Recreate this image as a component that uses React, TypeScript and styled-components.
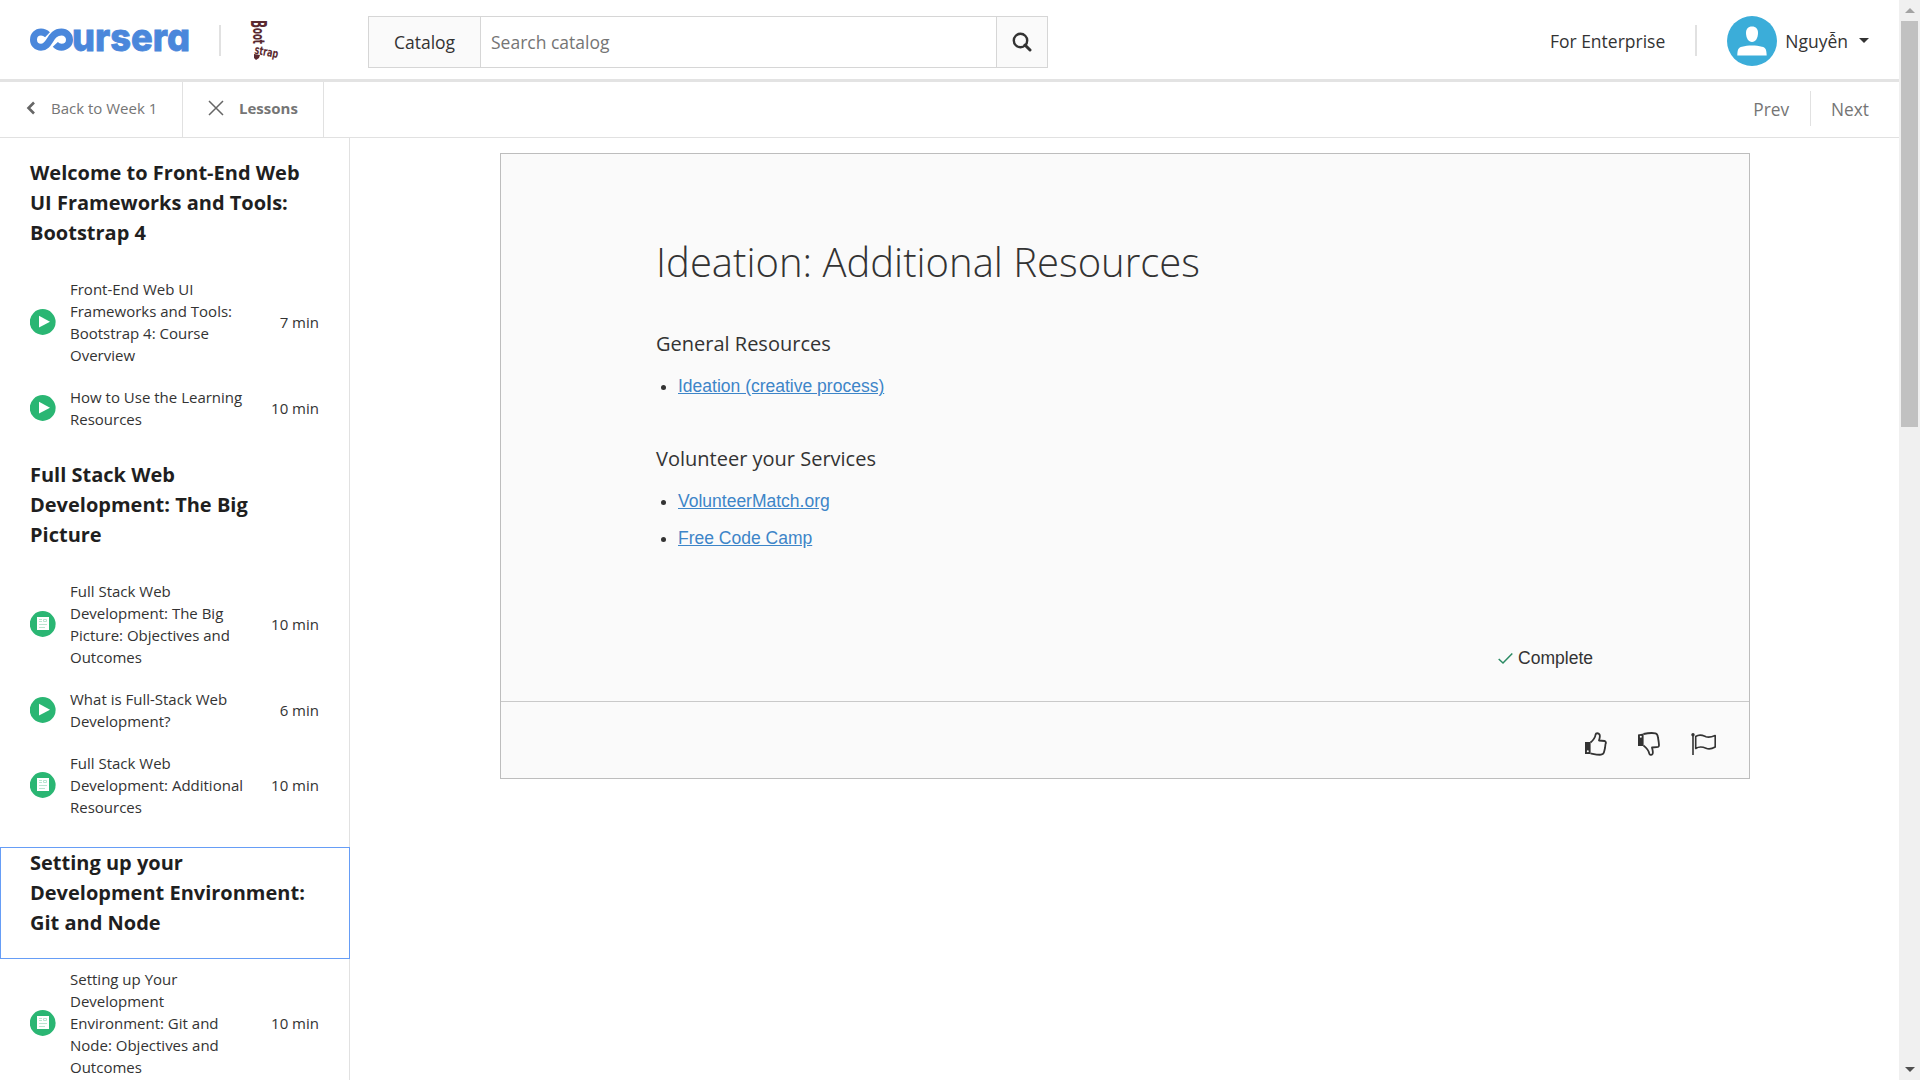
import React from "react";
import styled, { createGlobalStyle, css } from "styled-components";

const sans = `"Open Sans", "Noto Sans", sans-serif`;
const arial = `"Liberation Sans", Arial, sans-serif`;

const GlobalStyle = createGlobalStyle`
  *, *::before, *::after { box-sizing: border-box; }
  html, body { margin: 0; background: #fff; overflow: hidden; }
  body { font-family: ${sans}; color: #333; }
  h1, h2, h3, ul, p { margin: 0; padding: 0; }
  svg { display: block; }
`;

const Window = styled.div`
  display: grid;
  grid-template-columns: 1fr 21px;
  width: 1920px;
  height: 1080px;
  overflow: hidden;
`;

const Page = styled.div`
  display: flex;
  flex-direction: column;
  min-width: 0;
  height: 1080px;
  overflow: hidden;
`;

const Header = styled.header`
  display: flex;
  align-items: center;
  flex: none;
  height: 82px;
  padding: 2px 30px 0 30px;
  border-bottom: 3px solid #e3e3e3;
`;

const Rule = styled.span<{ $before: number; $after: number }>`
  width: 2px;
  height: 31px;
  margin: 0 ${(p) => p.$after}px 0 ${(p) => p.$before}px;
  background: #e1e1e1;
`;

const Search = styled.div`
  display: grid;
  grid-template-columns: 112px 1fr 51px;
  width: 680px;
  height: 52px;
  margin: 3px 0 0 78px;
  border: 1px solid #d6d6d6;
`;

const SearchButton = styled.button<{ $side: "left" | "right" }>`
  display: flex;
  align-items: center;
  justify-content: center;
  padding: 0;
  border: 0 solid #d6d6d6;
  ${(p) => (p.$side === "left" ? css`border-right-width: 1px;` : css`border-left-width: 1px;`)}
  background: #fafafa;
  color: #333;
  font: 400 17.5px ${sans};
`;

const SearchInput = styled.div`
  display: flex;
  align-items: center;
  padding-left: 10px;
  color: #757575;
  font-size: 17.5px;
`;

const Account = styled.div`
  display: flex;
  align-items: center;
  margin-left: auto;
  font-size: 17.5px;
`;

const UserName = styled.span`
  margin: 0 11px 0 8px;
`;

const SubBar = styled.nav`
  display: flex;
  flex: none;
  height: 56px;
  border-bottom: 1px solid #e1e1e1;
  color: #757575;
`;

const SubButton = styled.div<{ $width: number; $bold?: boolean }>`
  display: flex;
  align-items: center;
  width: ${(p) => p.$width}px;
  padding: 0 0 4px ${(p) => (p.$bold ? 25 : 26)}px;
  border-right: 1px solid #e1e1e1;
  font-size: 15px;
  font-weight: ${(p) => (p.$bold ? 700 : 400)};
`;

const Pager = styled.div`
  display: flex;
  align-items: center;
  margin-left: auto;
  padding-right: 30px;
  font-size: 17.3px;
`;

const PagerRule = styled.span`
  width: 1px;
  height: 35px;
  margin: -2px 20px 0 21px;
  background: #e1e1e1;
`;

const Body = styled.div`
  display: flex;
  flex: 1;
  min-height: 0;
`;

const Sidebar = styled.aside`
  flex: none;
  width: 350px;
  padding-top: 1px;
  border-right: 1px solid #e1e1e1;
`;

const SectionTitle = styled.h2<{ $focused?: boolean }>`
  margin: 18px -1px 0 0;
  padding: 0 30px 20px 29px;
  border: 1px solid ${(p) => (p.$focused ? "#669df6" : "transparent")};
  color: #1f1f1f;
  font-size: 20px;
  font-weight: 700;
  line-height: 30px;
`;

const Items = styled.div`
  margin-top: -1px;
  padding-bottom: 1px;
`;

const Item = styled.div`
  display: grid;
  grid-template-columns: 26px 180px 1fr;
  column-gap: 14px;
  align-items: center;
  padding: 10px 30px;
  font-size: 15px;
  line-height: 22px;
`;

const Duration = styled.span`
  margin-left: -14px;
  text-align: right;
`;

const Main = styled.main`
  flex: 1;
  padding: 15px 0 0 150px;
`;

const Card = styled.article`
  display: flex;
  flex-direction: column;
  width: 1250px;
  height: 626px;
  border: 1px solid #bdbdbd;
  background: #fafafa;
`;

const CardBody = styled.div`
  flex: 1;
  padding: 75px 155px 0;
`;

const Title = styled.h1`
  color: #333;
  font-size: 40px;
  font-weight: 300;
  line-height: 66px;
`;

const Topic = styled.h3<{ $gap: number }>`
  margin-top: ${(p) => p.$gap}px;
  font-size: 20px;
  font-weight: 400;
  line-height: 30px;
`;

const Links = styled.ul`
  display: flex;
  flex-direction: column;
  gap: 10px;
  margin-top: 14px;
  padding-left: 22px;
  font: 17.5px/27px ${arial};
`;

const Link = styled.a`
  color: #3d85c8;
  text-decoration: underline;
`;

const Complete = styled.div`
  display: flex;
  align-items: center;
  justify-content: flex-end;
  gap: 5px;
  margin: 93px 1px 0 0;
  font: 17.5px/27px ${arial};
`;

const CardFooter = styled.footer`
  display: flex;
  align-items: center;
  justify-content: flex-end;
  gap: 31px;
  height: 77px;
  padding: 8px 32px 0 0;
  border-top: 1px solid #c9c9c9;
`;

const Scrollbar = styled.div`
  display: flex;
  flex-direction: column;
  align-items: center;
  justify-content: space-between;
  background: #f0f0f0;
`;

const ScrollTrack = styled.div`
  flex: 1;
  width: 17px;
`;

const ScrollThumb = styled.div`
  height: 406px;
  background: #c1c1c1;
`;

const ScrollArrow = styled.div`
  display: flex;
  align-items: center;
  justify-content: center;
  height: 21px;
`;

const CourseraLogo = () => (
  <svg width="166" height="70" viewBox="0 -20 166 70" role="img" aria-label="coursera">
    <path
      d="M17.500 6.200C15.500 4.300 13.600 3.500 11 3.500C6.600 3.500 3.500 7 3.500 11.200C3.500 15.500 6.800 18.700 11 18.700C20.500 18.700 19.500 3.500 31.500 3.500C36 3.500 39.500 7 39.500 11.200C39.500 15.500 36 18.700 31.500 18.700C28.700 18.700 27 17.700 25.300 15.900"
      transform="translate(0 2.500)"
      fill="none"
      stroke="#4a87db"
      strokeWidth="7"
    />
    <text
      x="42"
      y="24.500"
      textLength="118"
      lengthAdjust="spacingAndGlyphs"
      fill="#4a87db"
      stroke="#4a87db"
      strokeWidth="0.800"
      style={{ fontFamily: "Inter, sans-serif", fontWeight: 800, fontSize: 39, fontFeatureSettings: '"cv11"' }}
    >
      ursera
    </text>
  </svg>
);

const BootstrapLogo = () => (
  <svg width="48" height="60" viewBox="-8 -9 48 60" fill="#5a2a30">
    <g fontFamily="DejaVu Sans, sans-serif" fontWeight="700">
      <text transform="translate(1 0) rotate(90)" fontSize="21" textLength="8" lengthAdjust="spacingAndGlyphs">B</text>
      <text transform="translate(3 8) rotate(90)" fontSize="15" textLength="16" lengthAdjust="spacingAndGlyphs">oot</text>
      <text transform="translate(4 33.500) rotate(11)" fontSize="12" textLength="24" lengthAdjust="spacingAndGlyphs">strap</text>
    </g>
    <path d="M4 34L10 35L9 38L6 40L4 38Z" />
  </svg>
);

const PlayIcon = () => (
  <svg width="26" height="26" viewBox="0 0 26 26">
    <circle cx="12.700" cy="13" r="12.900" fill="#2ab673" />
    <path d="M9 6.800L20 12.700L9 18.500Z" fill="#fff" />
  </svg>
);

const ReadingIcon = () => (
  <svg width="26" height="26" viewBox="0 0 26 26">
    <circle cx="12.700" cy="13" r="12.900" fill="#2ab673" />
    <path d="M7 6H19V19H7Z" fill="#fff" />
    <path d="M9 8.500H12M9 10.500H12M9 13.500H17M9 16.500H15" stroke="#b9e5d0" />
    <path d="M13.500 8.500H16.500V10.500H13.500Z" fill="none" stroke="#b9e5d0" />
  </svg>
);

const Avatar = () => (
  <svg width="50" height="50" viewBox="0 0 50 50">
    <circle cx="25" cy="25" r="25" fill="#3badd9" />
    <path d="M25 10.500C29 10.500 31 13 31 17C31 22 28.500 26 25 26C21.500 26 19 22 19 17C19 13 21 10.500 25 10.500Z" fill="#fff" />
    <path d="M10.300 39.500C10.500 33 11.500 31.500 15 30.700C21 29 29 29 35 30.700C38.500 31.500 39.500 33 39.700 39.500Z" fill="#fff" />
  </svg>
);

const ThumbUp = () => (
  <svg width="22" height="24" viewBox="0 0 22 24" fill="none" stroke="#333" strokeWidth="1.800" strokeLinejoin="round">
    <path d="M5.500 10.500C8.500 8 10.200 5.500 10.600 2.500C10.900 .8 13.500 .8 14.500 2.500C15.300 4 14.800 6 14 8.500L19.500 9C21 9.300 21.200 11 20.500 12L20 16L19.300 19C19 21.500 18 22.500 16 22.700C12 23 9 22 5.500 21.300" />
    <path d="M0 10H5.600V22H0Z" fill="#333" stroke="none" />
    <circle cx="2.800" cy="19.300" r="1" fill="#fff" stroke="none" />
  </svg>
);

const ThumbDown = () => (
  <svg width="22" height="24" viewBox="0 0 22 24" fill="none" stroke="#333" strokeWidth="1.800" strokeLinejoin="round">
    <path d="M5.500 2C10 1 14 .7 17.500 1.300C19.500 1.800 19.700 3 20 5.500L20.700 10L21 13C21 15 20 15.300 18.500 15.200L14 15.500C14.500 18 15.500 20.500 14.500 22C13.500 23.300 11.500 23 11.200 21.300C10.500 17.500 8.500 16 5.500 13.500" />
    <path d="M0 2.500L5.600 1.500V14H0Z" fill="#333" stroke="none" />
    <circle cx="2.800" cy="4.800" r="1" fill="#fff" stroke="none" />
  </svg>
);

const FlagIcon = () => (
  <svg width="26" height="24" viewBox="0 0 26 24" fill="none" stroke="#333" strokeWidth="1.600" strokeLinejoin="round">
    <path d="M2 2V23" />
    <circle cx="2" cy="2.700" r="1.700" fill="#333" stroke="none" />
    <path d="M4.700 4.500C9 1.500 12 3.500 15 4.700C18 5.800 21 4.800 24.200 3.500V15C21 16.800 18 17.500 15 16.200C11.500 14.800 8.500 14 4.700 16.500Z" />
  </svg>
);

type LessonItem = { kind: "video" | "reading"; name: string; time: string };

const sections: { title: string; focused?: boolean; items: LessonItem[] }[] = [
  {
    title: "Welcome to Front-End Web UI Frameworks and Tools: Bootstrap 4",
    items: [
      { kind: "video", name: "Front-End Web UI Frameworks and Tools: Bootstrap 4: Course Overview", time: "7 min" },
      { kind: "video", name: "How to Use the Learning Resources", time: "10 min" },
    ],
  },
  {
    title: "Full Stack Web Development: The Big Picture",
    items: [
      { kind: "reading", name: "Full Stack Web Development: The Big Picture: Objectives and Outcomes", time: "10 min" },
      { kind: "video", name: "What is Full-Stack Web Development?", time: "6 min" },
      { kind: "reading", name: "Full Stack Web Development: Additional Resources", time: "10 min" },
    ],
  },
  {
    title: "Setting up your Development Environment: Git and Node",
    focused: true,
    items: [
      { kind: "reading", name: "Setting up Your Development Environment: Git and Node: Objectives and Outcomes", time: "10 min" },
    ],
  },
];

export default function App() {
  return (
    <Window>
      <GlobalStyle />
      <Page>
        <Header>
          <CourseraLogo />
          <Rule $before={23} $after={21} />
          <BootstrapLogo />
          <Search>
            <SearchButton $side="left">Catalog</SearchButton>
            <SearchInput>Search catalog</SearchInput>
            <SearchButton $side="right">
              <svg width="20" height="20" viewBox="0 0 20 20" fill="none" stroke="#333">
                <circle cx="8.500" cy="8.500" r="6.700" strokeWidth="2.400" />
                <path d="M13 13L18 18" strokeWidth="3" strokeLinecap="round" />
              </svg>
            </SearchButton>
          </Search>
          <Account>
            <span>For Enterprise</span>
            <Rule $before={30} $after={30} />
            <Avatar />
            <UserName>Nguyễn</UserName>
            <svg width="10" height="5" viewBox="0 0 10 5"><path d="M0 0H10L5 5Z" fill="#333" /></svg>
          </Account>
        </Header>
        <SubBar>
          <SubButton $width={183}>
            <svg width="25" height="14" viewBox="0 0 25 14" fill="none" stroke="#666" strokeWidth="2.600">
              <path d="M8 1.500L2.500 7L8 12.500" />
            </svg>
            Back to Week 1
          </SubButton>
          <SubButton $width={141} $bold>
            <svg width="31" height="16" viewBox="0 0 31 16" fill="none" stroke="#666" strokeWidth="1.500">
              <path d="M1 1L15 15M15 1L1 15" />
            </svg>
            Lessons
          </SubButton>
          <Pager>
            <span>Prev</span>
            <PagerRule />
            <span>Next</span>
          </Pager>
        </SubBar>
        <Body>
          <Sidebar>
            {sections.map((section) => (
              <section key={section.title}>
                <SectionTitle $focused={section.focused}>{section.title}</SectionTitle>
                <Items>
                  {section.items.map((item) => (
                    <Item key={item.name}>
                      {item.kind === "video" ? <PlayIcon /> : <ReadingIcon />}
                      <span>{item.name}</span>
                      <Duration>{item.time}</Duration>
                    </Item>
                  ))}
                </Items>
              </section>
            ))}
          </Sidebar>
          <Main>
            <Card>
              <CardBody>
                <Title>Ideation: Additional Resources</Title>
                <Topic $gap={34}>General Resources</Topic>
                <Links>
                  <li><Link>Ideation (creative process)</Link></li>
                </Links>
                <Topic $gap={44}>Volunteer your Services</Topic>
                <Links>
                  <li><Link>VolunteerMatch.org</Link></li>
                  <li><Link>Free Code Camp</Link></li>
                </Links>
                <Complete>
                  <svg width="15" height="12" viewBox="0 0 15 12" fill="none" stroke="#2a8a63" strokeWidth="1.500">
                    <path d="M.7 6L5 10L14.300 .5" />
                  </svg>
                  Complete
                </Complete>
              </CardBody>
              <CardFooter>
                <ThumbUp />
                <ThumbDown />
                <FlagIcon />
              </CardFooter>
            </Card>
          </Main>
        </Body>
      </Page>
      <Scrollbar>
        <ScrollArrow>
          <svg width="10" height="5" viewBox="0 0 10 5"><path d="M0 5L5 0L10 5Z" fill="#a3a3a3" /></svg>
        </ScrollArrow>
        <ScrollTrack><ScrollThumb /></ScrollTrack>
        <ScrollArrow>
          <svg width="10" height="5" viewBox="0 0 10 5"><path d="M0 0H10L5 5Z" fill="#505050" /></svg>
        </ScrollArrow>
      </Scrollbar>
    </Window>
  );
}
